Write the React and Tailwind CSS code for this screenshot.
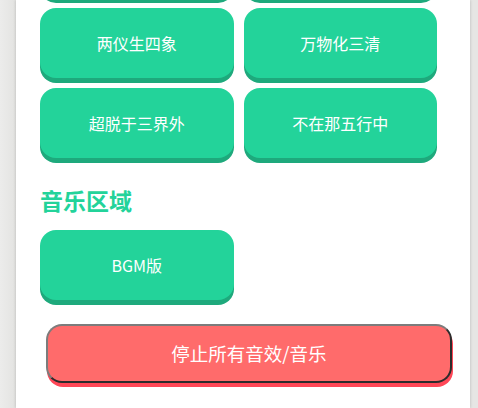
import React from 'react'

// Scrolled view of a sound-board panel: the first row of buttons sits above the fold,
// so only the bottom edge of those two buttons is visible.
const rows = [
  ['', ''],
  ['两仪生四象', '万物化三清'],
  ['超脱于三界外', '不在那五行中'],
]

function SoundButton({ label }) {
  return (
    <button className="h-[70px] rounded-[16px] bg-[#23d39a] text-white text-[16px] shadow-[0_5px_0_#1ea97c]">
      {label}
    </button>
  )
}

export default function App() {
  return (
    <div
      className="w-[478px] h-[408px] overflow-hidden bg-[#e6e6e4] flex"
      style={{ fontFamily: '"Noto Sans CJK SC", "Noto Sans", sans-serif' }}
    >
      <div className="w-[16px] shrink-0 bg-gradient-to-r from-[#ececeb] to-[#e3e3e1]" />
      <div className="w-[454px] shrink-0 bg-white pl-[24px] shadow-[0_0_3px_rgba(0,0,0,0.2)]">
        <div className="grid grid-cols-2 gap-[10px] w-[397px] mt-[-72px]">
          {rows.flat().map((label, i) => (
            <SoundButton key={i} label={label} />
          ))}
        </div>

        <h2 className="mt-[24px] text-[23px] font-bold leading-[36px] text-[#23d39a]">音乐区域</h2>

        <div className="grid grid-cols-2 gap-[10px] w-[397px] mt-[12px]">
          <SoundButton label="BGM版" />
        </div>

        <button className="mt-[24px] ml-[6px] w-[406px] h-[59px] rounded-[16px] bg-[#ff6b6b] text-white text-[18.5px] border-2 border-t-[#7c7c7c] border-l-[#7c7c7c] border-b-[#2c2c2c] border-r-[#2c2c2c] shadow-[1px_4px_0_#ff4757]">
          停止所有音效/音乐
        </button>
      </div>
    </div>
  )
}
